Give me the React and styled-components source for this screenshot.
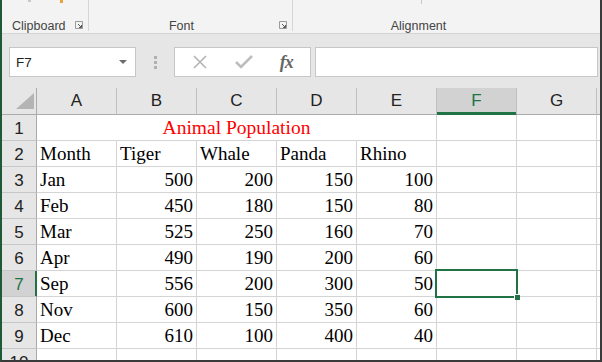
import React from 'react';
import styled, { createGlobalStyle } from 'styled-components';

const GlobalStyle = createGlobalStyle`
  html, body { margin: 0; padding: 0; background: #fff; }
  * { box-sizing: border-box; }
`;

const GREEN = '#217346';
const GRID = '#d4d4d4';

const Window = styled.div`
  position: relative;
  width: 602px;
  height: 362px;
  overflow: hidden;
  background: #fff;
  border-left: 2px solid #1f5a36;
  border-right: 2px solid #3a3a3a;
  border-bottom: 2px solid #3a3a3a;
  font-family: "Liberation Sans", Arial, sans-serif;
`;

const Ribbon = styled.div`
  display: flex;
  height: 34px;
  background: #f3f3f3;
  border-bottom: 1px solid #d5d5d5;
`;

const Group = styled.div`
  position: relative;
  width: ${(p) => p.w}px;
  flex: ${(p) => (p.w ? 'none' : '1')};
  height: 31px;
  border-right: ${(p) => (p.last ? 'none' : '1px solid #d5d5d5')};
  display: flex;
  align-items: flex-end;
  justify-content: ${(p) => (p.left ? 'flex-start' : 'center')};
  padding: 0 ${(p) => p.pr || 0}px 0 ${(p) => (p.left ? 10 : 0)}px;
  font-size: 12.5px;
  color: #444;
  line-height: 14px;
`;

const Label = styled.span`
  position: relative;
  top: 2px;
`;

const Launcher = styled.svg`
  position: absolute;
  right: 5px;
  bottom: 2px;
`;

const TopTick = styled.span`
  position: absolute;
  top: 0;
  left: ${(p) => p.x}px;
  width: ${(p) => p.w || 1}px;
  height: ${(p) => p.h || 3}px;
  background: ${(p) => p.c};
`;

const FormulaBar = styled.div`
  display: flex;
  align-items: flex-start;
  height: 54px;
  padding: 13px 2px 0 7px;
  background: #e6e6e6;
`;

const Box = styled.div`
  height: 30px;
  background: #fff;
  border: 1px solid #c6c6c6;
  display: flex;
  align-items: center;
`;

const NameBox = styled(Box)`
  width: 127px;
  padding: 0 8px 0 6px;
  justify-content: space-between;
  font-size: 13.5px;
  color: #222;
`;

const Arrow = styled.span`
  width: 0;
  height: 0;
  border-left: 4px solid transparent;
  border-right: 4px solid transparent;
  border-top: 4px solid #6d6d6d;
`;

const Dots = styled.div`
  width: 38px;
  height: 30px;
  display: flex;
  flex-direction: column;
  align-items: center;
  justify-content: center;
  gap: 2px;
  span {
    width: 3px;
    height: 3px;
    background: #b0b0b0;
  }
`;

const ButtonsBox = styled(Box)`
  width: 137px;
  justify-content: space-around;
  padding: 0 4px;
`;

const Fx = styled.span`
  font-family: "Liberation Serif", "Times New Roman", serif;
  font-style: italic;
  font-weight: bold;
  font-size: 18px;
  color: #666;
  letter-spacing: -1px;
`;

const Input = styled(Box)`
  flex: 1;
  margin-left: 4px;
`;

const Sheet = styled.div`
  position: relative;
  display: grid;
  grid-template-columns: 35px repeat(8, 80px);
  grid-template-rows: 27px;
  grid-auto-rows: 26px;
  width: 700px;
`;

const ColHead = styled.div`
  background: ${(p) => (p.sel ? '#d2d2d2' : '#e6e6e6')};
  border-right: 1px solid #c0c0c0;
  border-bottom: 1px solid ${(p) => (p.sel ? GREEN : '#ababab')};
  box-shadow: ${(p) => (p.sel ? `inset 0 -2px 0 ${GREEN}` : 'none')};
  color: ${(p) => (p.sel ? GREEN : '#222')};
  font-size: 17px;
  line-height: 26px;
  text-align: center;
`;

const Corner = styled(ColHead)`
  position: relative;
  border-right-color: #ababab;
  svg {
    position: absolute;
    right: 2px;
    bottom: 5px;
  }
`;

const RowHead = styled.div`
  background: ${(p) => (p.sel ? '#d2d2d2' : '#e6e6e6')};
  border-right: 1px solid ${(p) => (p.sel ? GREEN : '#ababab')};
  box-shadow: ${(p) => (p.sel ? `inset -1px 0 0 ${GREEN}` : 'none')};
  border-bottom: 1px solid #c6c6c6;
  color: ${(p) => (p.sel ? GREEN : '#222')};
  font-size: 17px;
  line-height: 25px;
  padding-top: 1px;
  text-align: center;
`;

const Cell = styled.div`
  grid-column: ${(p) => (p.span ? `span ${p.span}` : 'auto')};
  border-right: 1px solid ${GRID};
  border-bottom: 1px solid ${GRID};
  padding: 0 3px;
  font-family: "Liberation Serif", "Times New Roman", serif;
  font-size: ${(p) => p.size || 19}px;
  line-height: 25px;
  color: ${(p) => p.color || '#000'};
  text-align: ${(p) => p.align || 'left'};
  white-space: nowrap;
  overflow: hidden;
`;

const Selection = styled.div`
  position: absolute;
  left: 433px;
  top: 181px;
  width: 83px;
  height: 29px;
  border: 2px solid ${GREEN};
  pointer-events: none;
`;

const Handle = styled.div`
  position: absolute;
  right: -4px;
  bottom: -4px;
  width: 6px;
  height: 6px;
  background: ${GREEN};
  border: 1px solid #fff;
  border-right: none;
  border-bottom: none;
`;

const columns = ['A', 'B', 'C', 'D', 'E', 'F', 'G', ''];

const data = [
  ['Jan', 500, 200, 150, 100],
  ['Feb', 450, 180, 150, 80],
  ['Mar', 525, 250, 160, 70],
  ['Apr', 490, 190, 200, 60],
  ['Sep', 556, 200, 300, 50],
  ['Nov', 600, 150, 350, 60],
  ['Dec', 610, 100, 400, 40],
];

const LauncherIcon = () => (
  <Launcher width="8" height="8" viewBox="0 0 8 8">
    <path d="M0.5 0.5h7v7h-7z" fill="none" stroke="#9a9a9a" strokeWidth="1" />
    <path d="M3 3l3.5 3.5M6.5 4v2.5H4" fill="none" stroke="#5a5a5a" strokeWidth="1" />
  </Launcher>
);

const App = () => {
  const emptyTail = (n) =>
    Array.from({ length: n }, (_, i) => <Cell key={'e' + i} />);

  return (
    <Window>
      <GlobalStyle />
      <Ribbon>
        <Group w={87} left>
          <TopTick x={26} w={3} h={2} c="#c9c9c9" />
          <TopTick x={58} w={3} h={3} c="#e8a33c" />
          <Label>Clipboard</Label>
          <LauncherIcon />
        </Group>
        <Group w={204} pr={18}>
          <Label>Font</Label>
          <LauncherIcon />
        </Group>
        <Group last pr={56}>
          <TopTick x={128} h={4} c="#c8c8c8" />
          <Label>Alignment</Label>
        </Group>
      </Ribbon>

      <FormulaBar>
        <NameBox>
          F7
          <Arrow />
        </NameBox>
        <Dots>
          <span />
          <span />
          <span />
        </Dots>
        <ButtonsBox>
          <svg width="16" height="14" viewBox="0 0 16 14">
            <path d="M2 1l12 12M14 1L2 13" stroke="#b4b4b4" strokeWidth="1.6" fill="none" />
          </svg>
          <svg width="18" height="14" viewBox="0 0 18 14">
            <path d="M1 7l5 5L17 1" stroke="#bdbdbd" strokeWidth="2.6" fill="none" />
          </svg>
          <Fx>fx</Fx>
        </ButtonsBox>
        <Input />
      </FormulaBar>

      <Sheet>
        <Corner>
          <svg width="18" height="16" viewBox="0 0 18 16">
            <path d="M18 0V16H0z" fill="#b4b4b4" />
          </svg>
        </Corner>
        {columns.map((c) => (
          <ColHead key={c || 'h'} sel={c === 'F'}>
            {c}
          </ColHead>
        ))}

        <RowHead>1</RowHead>
        <Cell span={5} color="#ff0000" align="center" size={19.5}>
          Animal Population
        </Cell>
        {emptyTail(3)}

        <RowHead>2</RowHead>
        {['Month', 'Tiger', 'Whale', 'Panda', 'Rhino'].map((h) => (
          <Cell key={h}>{h}</Cell>
        ))}
        {emptyTail(3)}

        {data.map((row, i) => (
          <React.Fragment key={row[0]}>
            <RowHead sel={i + 3 === 7}>{i + 3}</RowHead>
            <Cell>{row[0]}</Cell>
            {row.slice(1).map((v, j) => (
              <Cell key={j} align="right">
                {v}
              </Cell>
            ))}
            {emptyTail(3)}
          </React.Fragment>
        ))}

        <RowHead>10</RowHead>
        {emptyTail(8)}

        <Selection>
          <Handle />
        </Selection>
      </Sheet>
    </Window>
  );
};

export default App;
